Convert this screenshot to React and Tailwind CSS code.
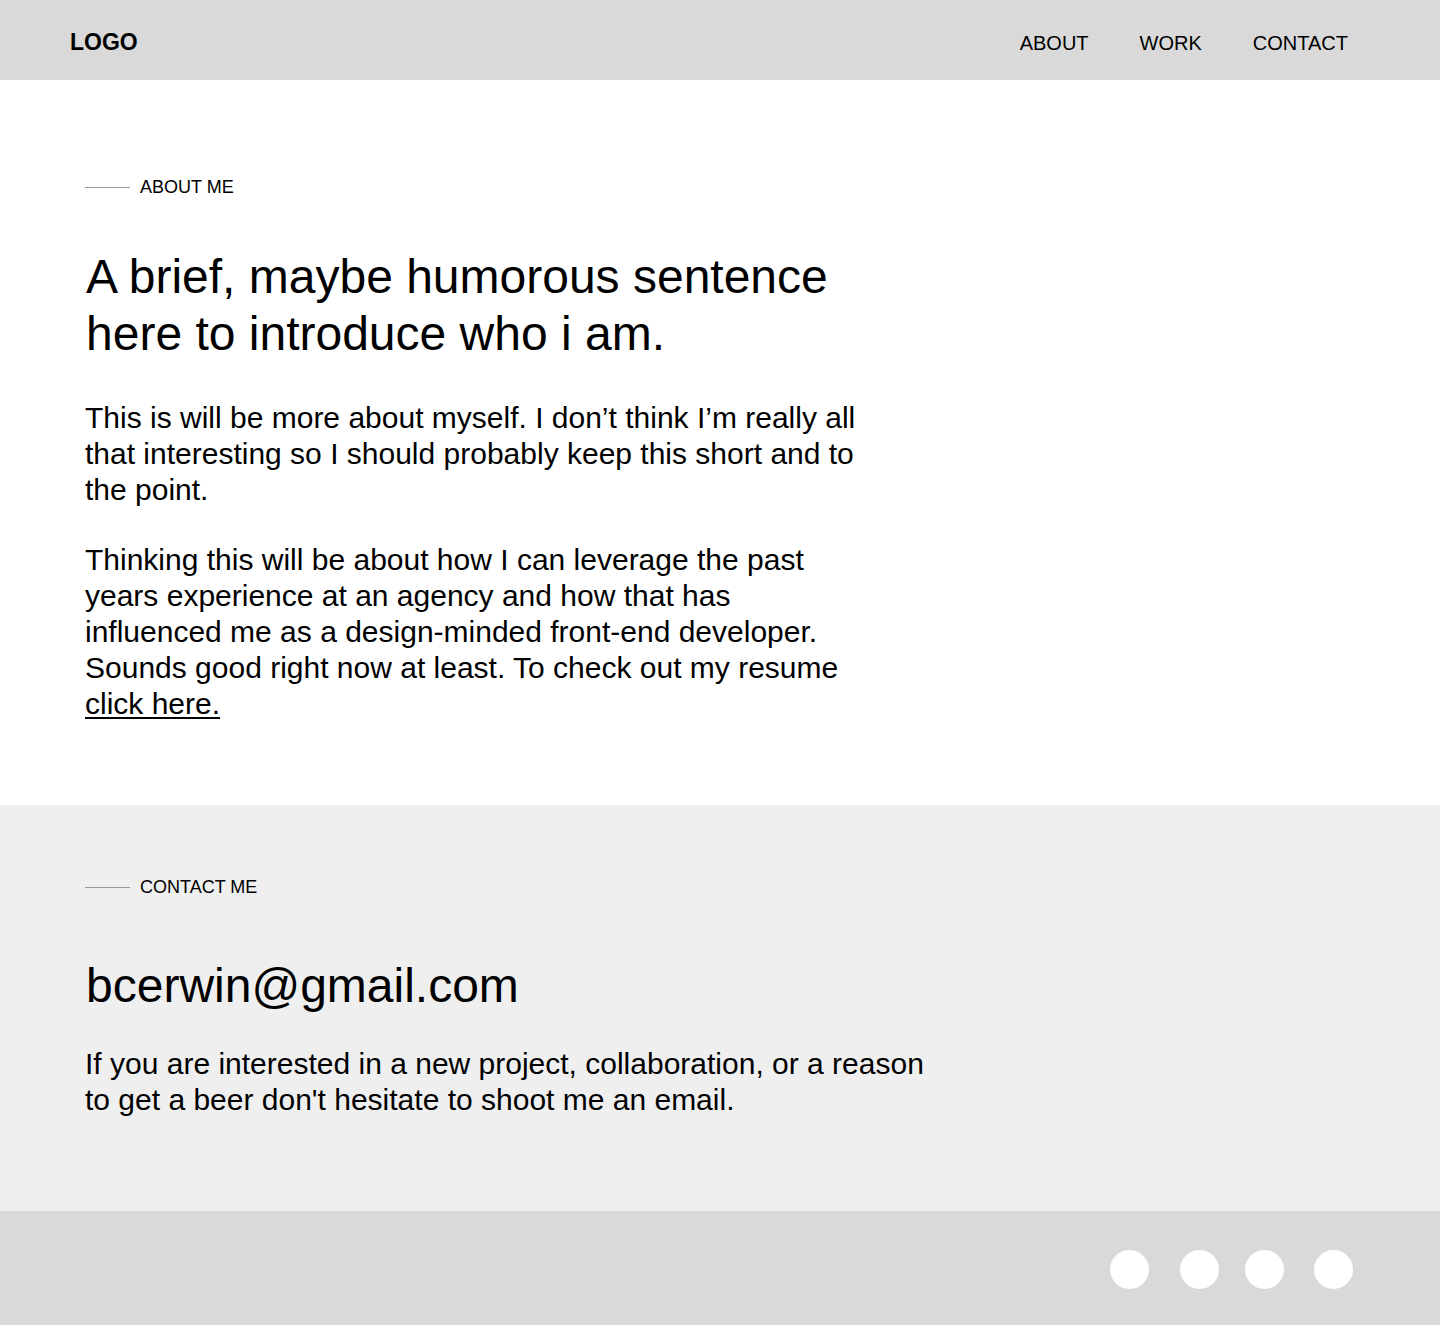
export default function App() {
  return (
    <div className="w-[1440px] min-h-[1325px] bg-white text-black font-['Liberation_Sans',Arial,sans-serif]">
      <header className="h-[80px] bg-[#d9d9d9] flex items-center justify-between pl-[70px] pr-[92px]">
        <div className="text-[23px] leading-[28px] font-bold pt-[4px]">LOGO</div>
        <nav className="flex items-center gap-[51px] text-[20px] leading-[24px] pt-[6px]">
          <a>ABOUT</a>
          <a>WORK</a>
          <a>CONTACT</a>
        </nav>
      </header>

      <section className="bg-white pl-[85px] pt-[95px] pb-[83px]">
        <div className="flex items-center gap-[10px] h-[24px]">
          <span className="block w-[45px] h-px bg-[#999999]" />
          <span className="text-[18px] leading-[24px]">ABOUT ME</span>
        </div>
        <div className="w-[790px]">
          <h1 className="mt-[49px] text-[48px] leading-[57px] font-normal pl-[1px]">
            A brief, maybe humorous sentence here to introduce who i am.
          </h1>
          <p className="mt-[38px] text-[30px] leading-[36px]">
            This is will be more about myself. I don’t think I’m really all that interesting so I should probably keep this short and to the point.
          </p>
          <p className="mt-[34px] text-[30px] leading-[36px]">
            Thinking this will be about how I can leverage the past years experience at an agency and how that has influenced me as a design-minded front-end developer. Sounds good right now at least. To check out my resume <a className="underline underline-offset-[3px] decoration-[1.5px]">click here.</a>
          </p>
        </div>
      </section>

      <section className="bg-[#efefef] pl-[85px] pt-[70px] pb-[93px]">
        <div className="flex items-center gap-[10px] h-[24px]">
          <span className="block w-[45px] h-px bg-[#999999]" />
          <span className="text-[18px] leading-[24px]">CONTACT ME</span>
        </div>
        <div className="w-[850px]">
          <h2 className="mt-[58px] text-[48px] leading-[57px] font-normal pl-[1px]">bcerwin@gmail.com</h2>
          <p className="mt-[32px] text-[30px] leading-[36px]">
            If you are interested in a new project, collaboration, or a reason to get a beer don't hesitate to shoot me an email.
          </p>
        </div>
      </section>

      <footer className="h-[114px] bg-[#d9d9d9] flex items-start justify-end pt-[39px] pr-[87px]">
        <span className="block w-[39px] h-[39px] rounded-full bg-white" />
        <span className="block w-[39px] h-[39px] rounded-full bg-white ml-[31px]" />
        <span className="block w-[39px] h-[39px] rounded-full bg-white ml-[26px]" />
        <span className="block w-[39px] h-[39px] rounded-full bg-white ml-[30px]" />
      </footer>
    </div>
  );
}
